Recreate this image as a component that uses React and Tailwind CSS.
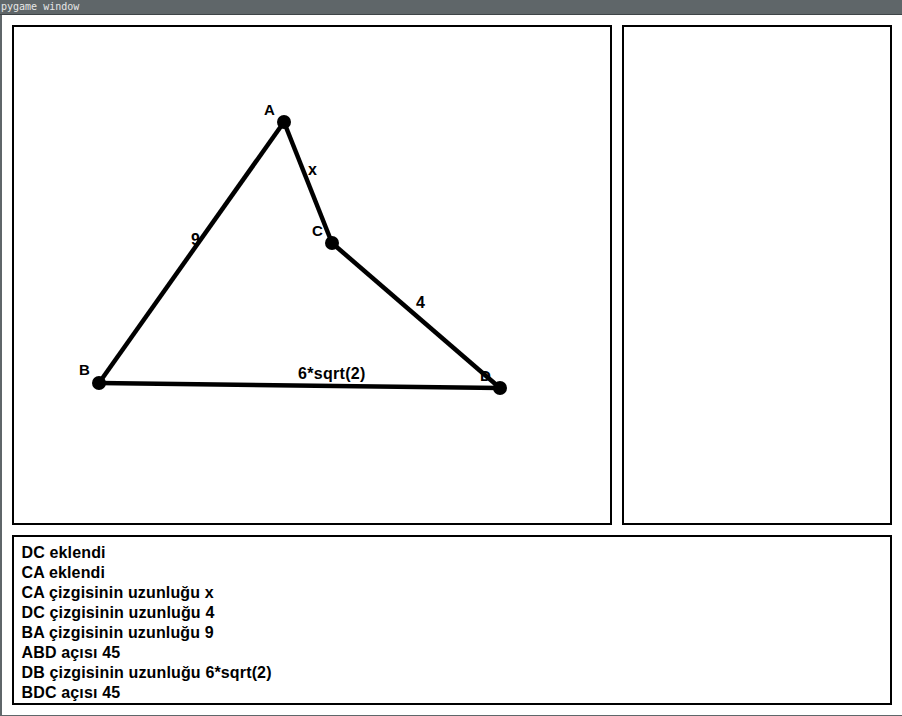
import React from "react";

const lines = [
  "DC eklendi",
  "CA eklendi",
  "CA çizgisinin uzunluğu x",
  "DC çizgisinin uzunluğu 4",
  "BA çizgisinin uzunluğu 9",
  "ABD açısı 45",
  "DB çizgisinin uzunluğu 6*sqrt(2)",
  "BDC açısı 45",
];

const pts = {
  A: [272, 97],
  B: [87, 358],
  C: [320, 218],
  D: [488, 363],
};

function Diagram() {
  const edges = [
    ["A", "B"],
    ["A", "C"],
    ["C", "D"],
    ["B", "D"],
  ];
  return (
    <svg
      width="600"
      height="500"
      viewBox="0 0 600 500"
      className="absolute -left-[2px] -top-[2px] font-['Liberation_Sans',Arial,sans-serif] font-bold"
    >
      {edges.map(([p, q]) => (
        <line
          key={p + q}
          x1={pts[p][0]}
          y1={pts[p][1]}
          x2={pts[q][0]}
          y2={pts[q][1]}
          stroke="#000"
          strokeWidth="4.5"
        />
      ))}
      {Object.entries(pts).map(([k, [x, y]]) => (
        <circle key={k} cx={x} cy={y} r="7" fill="#000" />
      ))}
      <text x="252" y="90" fontSize="15" fill="#000">A</text>
      <text x="67" y="350" fontSize="15" fill="#000">B</text>
      <text x="300" y="211" fontSize="15" fill="#000">C</text>
      <text x="468" y="356" fontSize="15" fill="#000">D</text>
      <text x="296" y="150" fontSize="16" fill="#000">x</text>
      <text x="179" y="220" fontSize="16" fill="#000">9</text>
      <text x="404" y="283" fontSize="16" fill="#000">4</text>
      <text x="286" y="354" fontSize="16" fill="#000" letterSpacing="0.3">6*sqrt(2)</text>
    </svg>
  );
}

export default function App() {
  return (
    <div className="w-[902px] h-[716px] bg-white flex flex-col overflow-hidden">
      <div className="h-[14px] bg-[#5f6669] text-[#e6e6e6] text-[10px] leading-[14px] pl-[1px] font-['DejaVu_Sans_Mono',monospace]">
        pygame window
      </div>
      <div className="h-[1px] bg-[#3e4447]" />
      <div className="flex-1 flex border-l-2 border-[#5f6669]">
        <div className="flex flex-col gap-[10px] pt-[10px] pl-[10px]">
          <div className="flex gap-[10px]">
            <div className="relative w-[600px] h-[500px] border-2 border-black">
              <Diagram />
            </div>
            <div className="w-[270px] h-[500px] border-2 border-black" />
          </div>
          <div className="w-[880px] h-[170px] border-2 border-black pt-[6px] pl-[7.5px] font-['Liberation_Sans',Arial,sans-serif] font-bold text-[16px] leading-[20px] tracking-[0.15px] text-black">
            {lines.map((l) => (
              <div key={l}>{l}</div>
            ))}
          </div>
        </div>
      </div>
      <div className="h-[1px] bg-[#5f6669]" />
    </div>
  );
}
